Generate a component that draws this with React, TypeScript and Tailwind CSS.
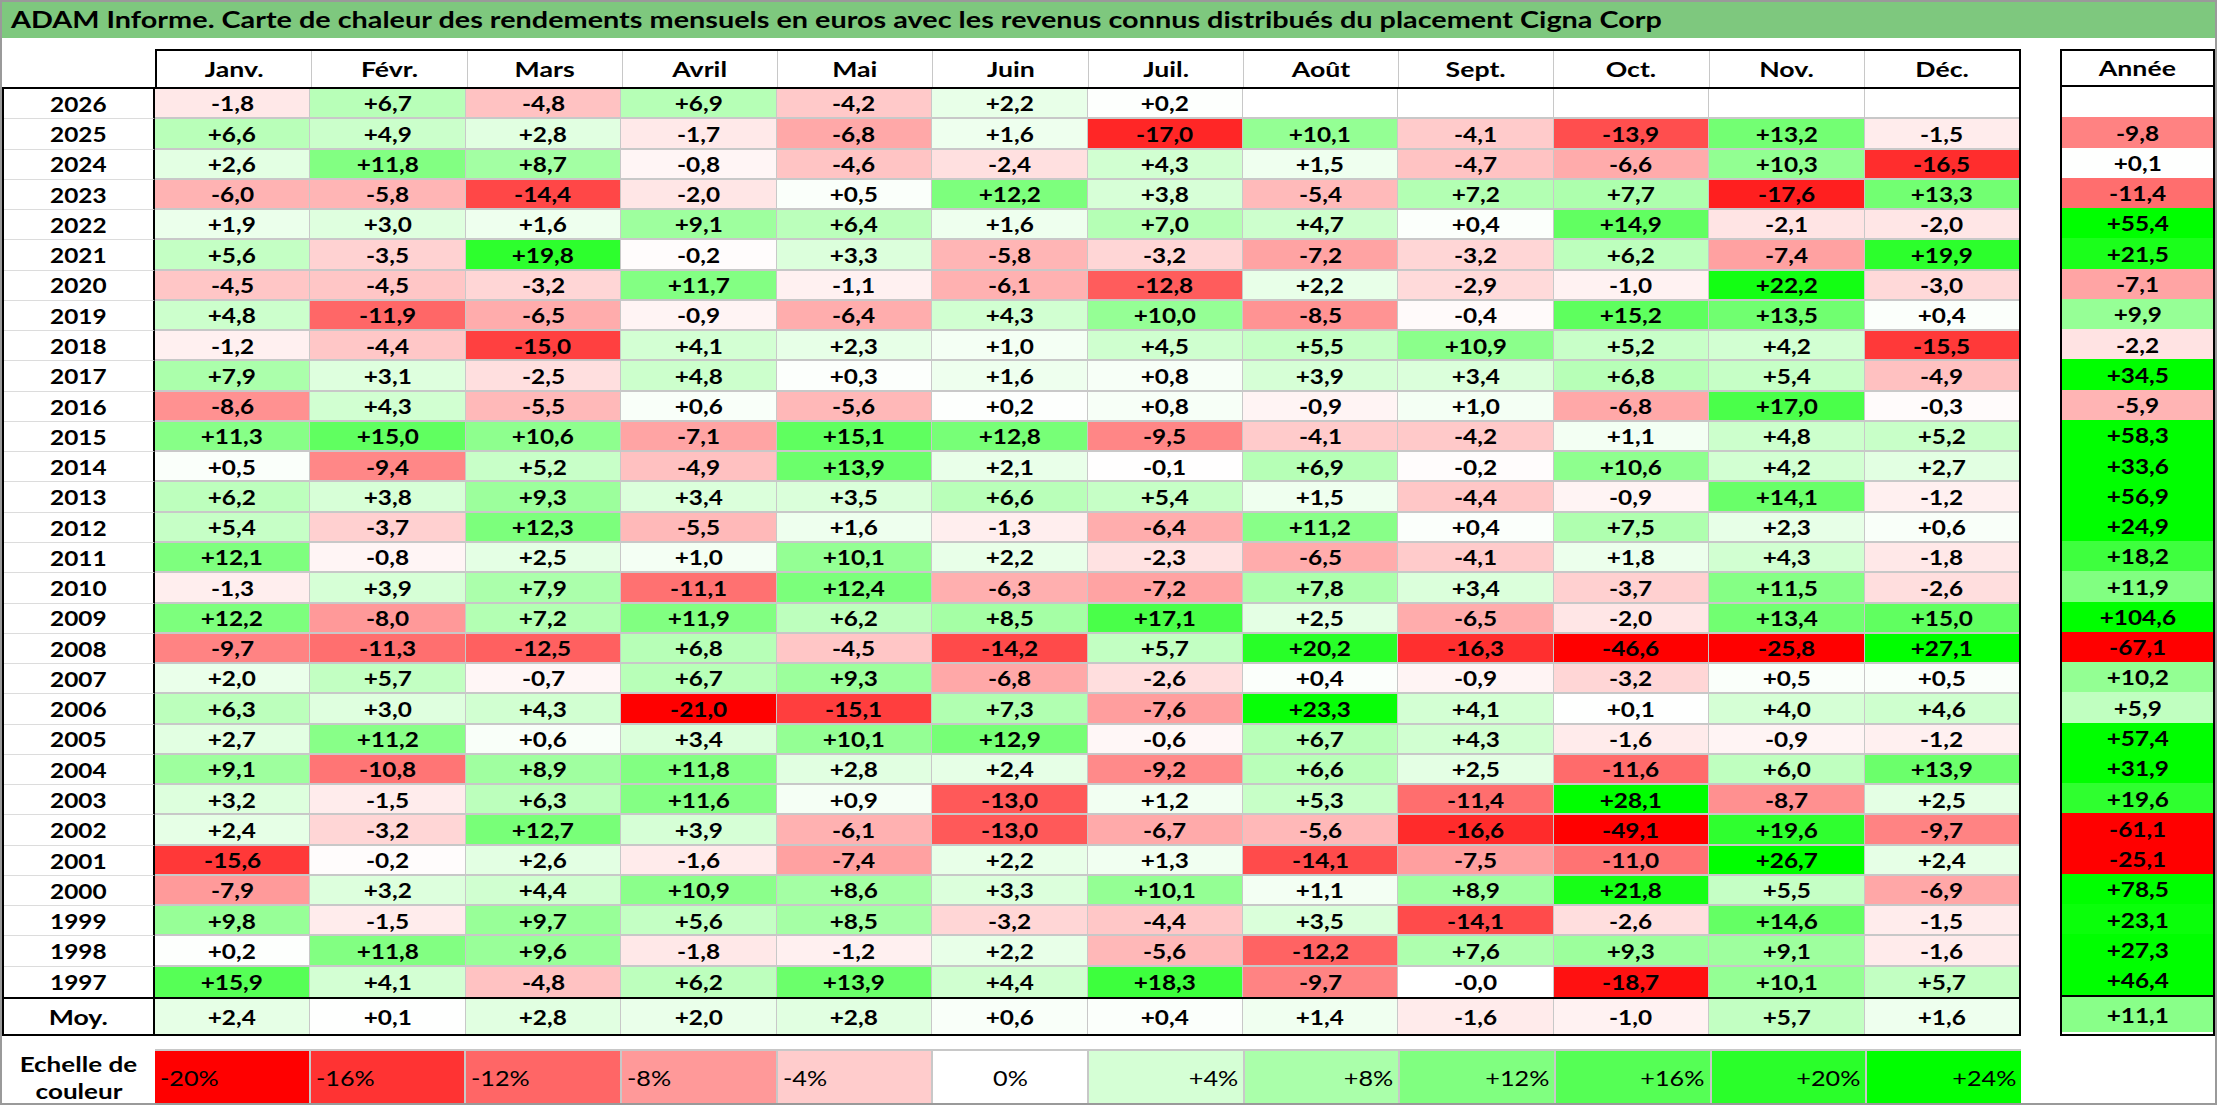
import React from "react";

type Row = { year: string; values: (number | null)[]; total: number | null };

const MONTHS = [
  "Janv.",
  "Févr.",
  "Mars",
  "Avril",
  "Mai",
  "Juin",
  "Juil.",
  "Août",
  "Sept.",
  "Oct.",
  "Nov.",
  "Déc.",
];

const RAW: [string, string, string][] = [
  ["2026", "-1.8 6.7 -4.8 6.9 -4.2 2.2 0.2 x x x x x", "x"],
  ["2025", "6.6 4.9 2.8 -1.7 -6.8 1.6 -17.0 10.1 -4.1 -13.9 13.2 -1.5", "-9.8"],
  ["2024", "2.6 11.8 8.7 -0.8 -4.6 -2.4 4.3 1.5 -4.7 -6.6 10.3 -16.5", "0.1"],
  ["2023", "-6.0 -5.8 -14.4 -2.0 0.5 12.2 3.8 -5.4 7.2 7.7 -17.6 13.3", "-11.4"],
  ["2022", "1.9 3.0 1.6 9.1 6.4 1.6 7.0 4.7 0.4 14.9 -2.1 -2.0", "55.4"],
  ["2021", "5.6 -3.5 19.8 -0.2 3.3 -5.8 -3.2 -7.2 -3.2 6.2 -7.4 19.9", "21.5"],
  ["2020", "-4.5 -4.5 -3.2 11.7 -1.1 -6.1 -12.8 2.2 -2.9 -1.0 22.2 -3.0", "-7.1"],
  ["2019", "4.8 -11.9 -6.5 -0.9 -6.4 4.3 10.0 -8.5 -0.4 15.2 13.5 0.4", "9.9"],
  ["2018", "-1.2 -4.4 -15.0 4.1 2.3 1.0 4.5 5.5 10.9 5.2 4.2 -15.5", "-2.2"],
  ["2017", "7.9 3.1 -2.5 4.8 0.3 1.6 0.8 3.9 3.4 6.8 5.4 -4.9", "34.5"],
  ["2016", "-8.6 4.3 -5.5 0.6 -5.6 0.2 0.8 -0.9 1.0 -6.8 17.0 -0.3", "-5.9"],
  ["2015", "11.3 15.0 10.6 -7.1 15.1 12.8 -9.5 -4.1 -4.2 1.1 4.8 5.2", "58.3"],
  ["2014", "0.5 -9.4 5.2 -4.9 13.9 2.1 -0.1 6.9 -0.2 10.6 4.2 2.7", "33.6"],
  ["2013", "6.2 3.8 9.3 3.4 3.5 6.6 5.4 1.5 -4.4 -0.9 14.1 -1.2", "56.9"],
  ["2012", "5.4 -3.7 12.3 -5.5 1.6 -1.3 -6.4 11.2 0.4 7.5 2.3 0.6", "24.9"],
  ["2011", "12.1 -0.8 2.5 1.0 10.1 2.2 -2.3 -6.5 -4.1 1.8 4.3 -1.8", "18.2"],
  ["2010", "-1.3 3.9 7.9 -11.1 12.4 -6.3 -7.2 7.8 3.4 -3.7 11.5 -2.6", "11.9"],
  ["2009", "12.2 -8.0 7.2 11.9 6.2 8.5 17.1 2.5 -6.5 -2.0 13.4 15.0", "104.6"],
  ["2008", "-9.7 -11.3 -12.5 6.8 -4.5 -14.2 5.7 20.2 -16.3 -46.6 -25.8 27.1", "-67.1"],
  ["2007", "2.0 5.7 -0.7 6.7 9.3 -6.8 -2.6 0.4 -0.9 -3.2 0.5 0.5", "10.2"],
  ["2006", "6.3 3.0 4.3 -21.0 -15.1 7.3 -7.6 23.3 4.1 0.1 4.0 4.6", "5.9"],
  ["2005", "2.7 11.2 0.6 3.4 10.1 12.9 -0.6 6.7 4.3 -1.6 -0.9 -1.2", "57.4"],
  ["2004", "9.1 -10.8 8.9 11.8 2.8 2.4 -9.2 6.6 2.5 -11.6 6.0 13.9", "31.9"],
  ["2003", "3.2 -1.5 6.3 11.6 0.9 -13.0 1.2 5.3 -11.4 28.1 -8.7 2.5", "19.6"],
  ["2002", "2.4 -3.2 12.7 3.9 -6.1 -13.0 -6.7 -5.6 -16.6 -49.1 19.6 -9.7", "-61.1"],
  ["2001", "-15.6 -0.2 2.6 -1.6 -7.4 2.2 1.3 -14.1 -7.5 -11.0 26.7 2.4", "-25.1"],
  ["2000", "-7.9 3.2 4.4 10.9 8.6 3.3 10.1 1.1 8.9 21.8 5.5 -6.9", "78.5"],
  ["1999", "9.8 -1.5 9.7 5.6 8.5 -3.2 -4.4 3.5 -14.1 -2.6 14.6 -1.5", "23.1"],
  ["1998", "0.2 11.8 9.6 -1.8 -1.2 2.2 -5.6 -12.2 7.6 9.3 9.1 -1.6", "27.3"],
  ["1997", "15.9 4.1 -4.8 6.2 13.9 4.4 18.3 -9.7 -0.0 -18.7 10.1 5.7", "46.4"],
];

const parse = (s: string): number | null => (s === "x" ? null : Number(s));

const ROWS: Row[] = RAW.map(([year, vals, total]) => ({
  year,
  values: vals.split(" ").map(parse),
  total: parse(total),
}));

const RAW_VALUES = RAW.map(([, vals]) => vals.split(" "));

const AVG: Row = {
  year: "Moy.",
  values: "2.4 0.1 2.8 2.0 2.8 0.6 0.4 1.4 -1.6 -1.0 5.7 1.6"
    .split(" ")
    .map(parse),
  total: 11.1,
};

const SCALE = [-20, -16, -12, -8, -4, 0, 4, 8, 12, 16, 20, 24];

// red below zero (full at -20), green above (full at +24)
function heat(v: number | null): string {
  if (v === null) return "#ffffff";
  if (v >= 0) {
    const c = Math.round(255 * (1 - Math.min(v / 24, 1)));
    return `rgb(${c},255,${c})`;
  }
  const c = Math.round(255 * (1 - Math.min(-v / 20, 1)));
  return `rgb(255,${c},${c})`;
}

function fmt(v: number | null, raw?: string): string {
  if (v === null) return "";
  if (raw === "-0.0") return "-0,0";
  const s = Math.abs(v).toFixed(1).replace(".", ",");
  return (v < 0 ? "-" : "+") + s;
}

// the source sheet is a horizontally stretched Calibri capture
const NUM = "inline-block scale-x-[1.16]";
const WORD = "inline-block scale-x-[1.27]";

const ROW_H = "h-[30.27px]";

const App: React.FC = () => {
  return (
    <div className="h-[1105px] w-[2217px] overflow-hidden border-2 border-[#9a9a9a] bg-white font-['Lato',_'Liberation_Sans',_sans-serif] text-black">
      {/* Title bar */}
      <div className="flex h-[36px] items-center bg-[#7ec87e] pl-[9px] text-[22px] font-bold leading-none">
        <span className="inline-block origin-left scale-x-[1.31] whitespace-nowrap">
          ADAM Informe. Carte de chaleur des rendements mensuels en euros avec
          les revenus connus distribués du placement Cigna Corp
        </span>
      </div>

      <div className="mt-[11px] flex">
        {/* Month table */}
        <div className="flex w-[2019px] flex-col">
          <div className="ml-[153px] flex h-[38px] border-2 border-b-0 border-black">
            {MONTHS.map((m, i) => (
              <div
                key={m}
                className={`flex flex-1 items-center justify-center text-[21px] font-bold ${i < 11 ? "border-r border-[#c8c8c8]" : ""}`}
              >
                <span className={WORD}>{m}</span>
              </div>
            ))}
          </div>
          <div className="border-2 border-black">
            {ROWS.map((row, r) => (
              <div key={row.year} className={`flex ${ROW_H}`}>
                <div
                  className={`flex w-[151px] items-center justify-center border-r-2 border-black text-[21px] font-bold ${r < ROWS.length - 1 ? "border-b border-b-[#dcdcdc]" : ""}`}
                >
                  <span className={NUM}>{row.year}</span>
                </div>
                {row.values.map((v, i) => (
                  <div
                    key={i}
                    className={`flex flex-1 items-center justify-center text-[21px] font-bold ${i < 11 ? "border-r border-[#c8c8c8]" : ""} ${r < ROWS.length - 1 ? "border-b-2 border-b-[#c8c8c8]" : ""}`}
                    style={{ backgroundColor: heat(v) }}
                  >
                    <span className={NUM}>{fmt(v, RAW_VALUES[r][i])}</span>
                  </div>
                ))}
              </div>
            ))}
            <div className="flex h-[37px] border-t-2 border-black">
              <div className="flex w-[151px] items-center justify-center border-r-2 border-black text-[21px] font-bold">
                <span className={WORD}>{AVG.year}</span>
              </div>
              {AVG.values.map((v, i) => (
                <div
                  key={i}
                  className={`flex flex-1 items-center justify-center text-[21px] font-bold ${i < 11 ? "border-r border-[#c8c8c8]" : ""}`}
                  style={{ backgroundColor: heat(v) }}
                >
                  <span className={NUM}>{fmt(v)}</span>
                </div>
              ))}
            </div>
          </div>
        </div>

        {/* Year total table */}
        <div className="ml-[39px] flex w-[155px] flex-col border-2 border-black">
          <div className="flex h-[36px] items-center justify-center border-b-2 border-black text-[21px] font-bold">
            <span className={WORD}>Année</span>
          </div>
          {ROWS.map((row) => (
            <div
              key={row.year}
              className={`flex ${ROW_H} items-center justify-center text-[21px] font-bold`}
              style={{ backgroundColor: heat(row.total) }}
            >
              <span className={NUM}>{fmt(row.total)}</span>
            </div>
          ))}
          <div
            className="flex h-[37px] items-center justify-center border-t-2 border-black text-[21px] font-bold"
            style={{ backgroundColor: heat(AVG.total) }}
          >
            <span className={NUM}>{fmt(AVG.total)}</span>
          </div>
        </div>
      </div>

      {/* Colour scale */}
      <div className="mt-[13px] flex h-[56px] w-[2019px]">
        <div className="flex w-[153px] flex-col items-center justify-center text-[21px] font-bold leading-[27px]">
          <span className="inline-block scale-x-[1.24]">Echelle de</span>
          <span className="inline-block scale-x-[1.24]">couleur</span>
        </div>
        <div className="flex flex-1 border-t-2 border-[#c8c8c8]">
          {SCALE.map((s, i) => (
            <div
              key={s}
              className={`flex flex-1 items-center px-[5px] text-[21px] ${s < 0 ? "justify-start" : s === 0 ? "justify-center" : "justify-end"} ${i < 11 ? "border-r-2 border-[#c8c8c8]" : ""}`}
              style={{ backgroundColor: heat(s) }}
            >
              <span
                className={`inline-block scale-x-[1.2] ${s < 0 ? "origin-left" : s === 0 ? "origin-center" : "origin-right"}`}
              >
                {s > 0 ? `+${s}%` : `${s}%`}
              </span>
            </div>
          ))}
        </div>
      </div>
    </div>
  );
};

export default App;
